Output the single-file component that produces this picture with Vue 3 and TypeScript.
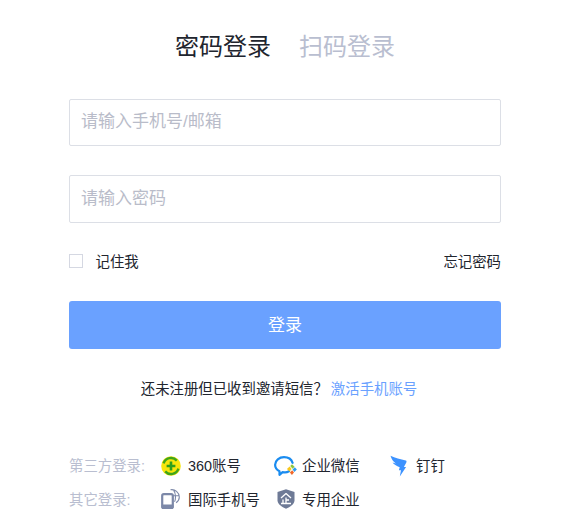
<script setup lang="ts">
const tabs: { label: string; active: boolean }[] = [
  { label: '密码登录', active: true },
  { label: '扫码登录', active: false }
]
</script>

<template>
  <div class="page">
    <div class="tabs">
      <span v-for="t in tabs" :key="t.label" class="tab" :class="{ active: t.active }">{{ t.label }}</span>
    </div>
    <form class="form" @submit.prevent>
      <input class="field" type="text" placeholder="请输入手机号/邮箱" />
      <input class="field second" type="password" placeholder="请输入密码" />
      <div class="options">
        <label class="remember"><span class="box"></span>记住我</label>
        <a class="forgot">忘记密码</a>
      </div>
      <button class="submit" type="submit">登录</button>
    </form>
    <p class="activate">还未注册但已收到邀请短信？<a class="link">激活手机账号</a></p>
    <div class="others">
      <div class="row">
        <span class="row-label">第三方登录:</span>
        <span class="item w360">
          <svg class="ico i360" viewBox="0 0 20 20">
            <circle cx="10" cy="10" r="9.8" fill="#f7e50c" />
            <path d="M2.600 7.400A7.800 7.800 0 0 1 15.800 4.600" fill="none" stroke="#3fa51a" stroke-width="2.400" />
            <path d="M17.400 12.600A7.800 7.800 0 0 1 4.200 15.400" fill="none" stroke="#3fa51a" stroke-width="2.400" />
            <path d="M10 5.600v8.800M5.600 10h8.800" stroke="#2f9e1c" stroke-width="2.600" />
          </svg>
          360账号
        </span>
        <span class="item wwx">
          <svg class="ico iwx" viewBox="0 0 23 20">
            <path d="M15 15.300c-1.200.7-2.500 1.100-3.800 1.100-.9 0-1.800-.1-2.600-.3L5.500 18.800v-3.500C2.800 13.900 1.100 11.500 1.100 8.800 1.100 4.500 5.300 1.200 10 1.200c4 0 7.500 2.300 8.600 5.600" fill="none" stroke="#1a8cf0" stroke-width="2.200" stroke-linecap="round" stroke-linejoin="round" />
            <path d="M18 8.200l2.600 2.600-2 2-2.400-2.800z" fill="#8cc63f" />
            <path d="M15.600 10.400l2 2.600-2 2.400-2.700-2.500z" fill="#f8c71b" />
            <path d="M20.800 11.200l2.100 2.400-2.500 2.400-1.800-2.400z" fill="#2d9df0" />
            <path d="M18.200 14.300l1.800 2.300-2.100 2.400-2-2.500z" fill="#f0682a" />
          </svg>
          企业微信
        </span>
        <span class="item">
          <svg class="ico iding" viewBox="0 0 17 22">
            <path d="M.5.800C5 3 10.500 4.200 15.800 5.400c.9.300.9 1 .4 2.300l-2.300 4.200h2.200L9.800 21.500l1.200-6.200H8.900l.8-3C6.700 11.300 3.500 9.300 2.500 7.600l3.400 1C3.400 6.700 1.300 4 .5.800z" fill="#3c92ff" />
          </svg>
          钉钉
        </span>
      </div>
      <div class="row">
        <span class="row-label">其它登录:</span>
        <span class="item wphone">
          <svg class="ico iphone" viewBox="0 0 19 20">
            <path d="M9.500 .8a7.500 7.500 0 0 1 8.800 7.200c0 2.500-1.200 4.500-3.200 5.800M12.500 1.200c2.200 2.500 2.600 8.500 1 11.500M11 6.700h7.300" fill="none" stroke="#7c88a8" stroke-width="1.100" />
            <rect x="1.200" y="5.200" width="10.600" height="14" rx="1.600" fill="#fff" stroke="#7c88a8" stroke-width="2.200" />
            <rect x=".5" y="15.500" width="12" height="4.300" rx="1.600" fill="#7c88a8" />
          </svg>
          国际手机号
        </span>
        <span class="item">
          <svg class="ico ishield" viewBox="0 0 18 20">
            <path d="M9 .3l8.500 2.700v8.200c0 3.900-4.300 6.700-8.500 8.500C4.800 17.900.5 15.100.5 11.200V3z" fill="#6e7a96" />
            <path d="M9 4.500L4 9M9 4.500L14 9M9 8.500v6M9 11h3M6 10.500v4M4 14.500h10" fill="none" stroke="#fff" stroke-width="1.300" />
          </svg>
          专用企业
        </span>
      </div>
    </div>
  </div>
</template>

<style scoped>
.page {
  width: 569px;
  height: 528px;
  box-sizing: border-box;
  padding: 0 68px 0 69px;
  overflow: hidden;
  background: #fff;
  font-family: "Liberation Sans", "Noto Sans CJK SC", sans-serif;
  color: #21252e;
}
.tabs {
  display: flex;
  justify-content: center;
  gap: 28px;
  height: 99px;
  padding-top: 29px;
  box-sizing: border-box;
  font-size: 24px;
  line-height: 36px;
}
.tab { color: #b9bed0; }
.tab.active { color: #21252e; }
.form { display: flex; flex-direction: column; }
.field {
  height: 47px;
  box-sizing: border-box;
  border: 1px solid #dcdfe6;
  border-radius: 2px;
  padding: 0 12px 2px 11px;
  font: 17px "Liberation Sans", "Noto Sans CJK SC", sans-serif;
  outline: none;
}
.field.second { height: 48px; margin-top: 29px; padding-bottom: 0; }
.field::placeholder { color: #b9bcc9; opacity: 1; }
.options {
  display: flex;
  justify-content: space-between;
  align-items: center;
  height: 20px;
  margin-top: 27px;
  font-size: 14.400px;
}
.remember { display: flex; align-items: center; }
.box {
  width: 14px;
  height: 14px;
  margin-top: 2px;
  box-sizing: border-box;
  border: 1px solid #d5d8e2;
  margin-right: 12.500px;
}
.submit {
  margin-top: 31px;
  height: 48px;
  border: none;
  border-radius: 3px;
  background: #6aa1ff;
  color: #fff;
  font: 17px "Liberation Sans", "Noto Sans CJK SC", sans-serif;
  padding: 0 0 4px;
}
.activate {
  margin: 30px 0 0;
  padding-right: 12px;
  text-align: center;
  font-size: 14.400px;
  line-height: 20px;
}
.link { color: #6aa1ff; margin-left: 3px; }
.others { margin-top: 48px; font-size: 14.400px; }
.row { display: flex; align-items: center; height: 34px; }
.row-label { color: #b9bed0; flex: none; width: 92px; }
.item { display: flex; align-items: center; flex: none; }
.w360 { width: 113px; }
.wwx { width: 116px; }
.wphone { width: 116px; }
.ico { flex: none; height: 20px; margin-top: 4px; }
.i360 { width: 20px; margin-right: 7px; }
.iwx { width: 23px; margin-right: 5px; }
.iding { width: 17px; height: 22px; margin-right: 9px; }
.iphone { width: 19px; margin-top: 2px; margin-right: 8px; }
.ishield { width: 18px; margin-top: 2px; margin-right: 7px; }
</style>
